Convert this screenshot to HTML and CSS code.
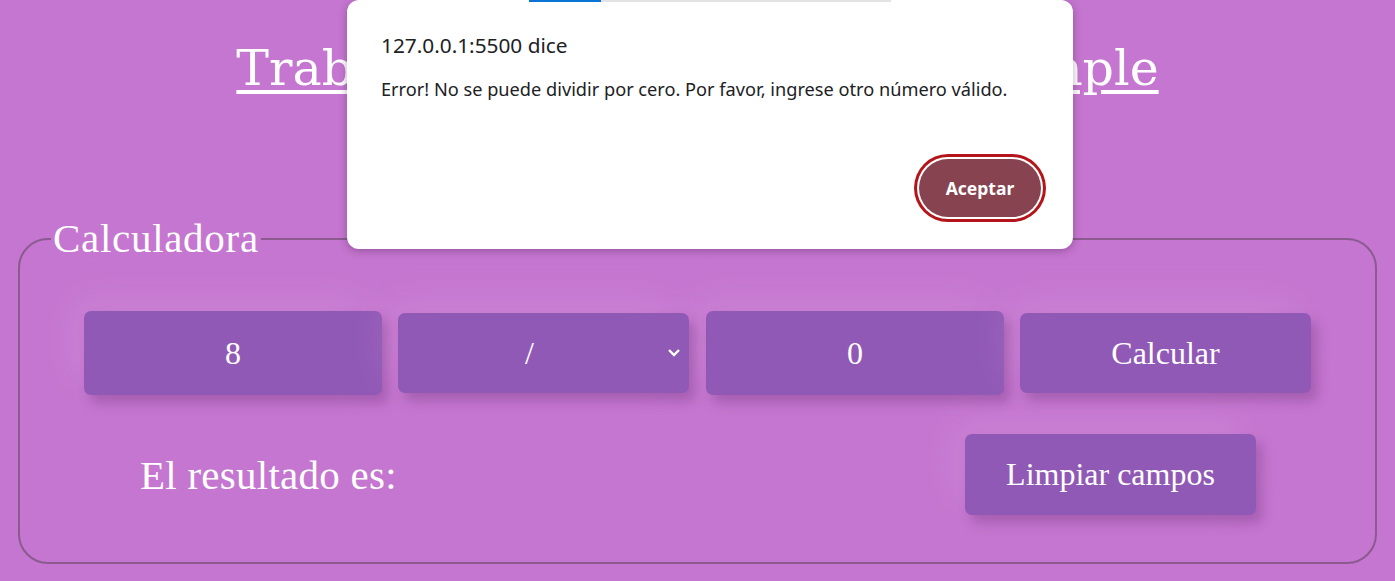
FILE: index.html
```html
<!DOCTYPE html>
<html lang="es">
<head>
<meta charset="utf-8">
<title>Calculadora simple</title>
<link rel="stylesheet" href="styles.css">
</head>
<body>
  <h1 class="title"><span class="title-link">Trabajo Práctico: Calculadora simple</span></h1>

  <fieldset class="calc">
    <legend class="calc-legend">Calculadora</legend>
    <div class="row-inputs">
      <div class="field field-num">8</div>
      <div class="field field-select">
        <span class="select-value">/</span>
        <svg class="chevron" width="14" height="9" viewBox="0 0 14 9"><path d="M2 2 L7 7 L12 2" fill="none" stroke="#fff" stroke-width="2.4"/></svg>
      </div>
      <div class="field field-num">0</div>
      <div class="field field-btn">Calcular</div>
    </div>
    <div class="row-result">
      <p class="result">El resultado es:</p>
      <div class="field field-btn field-clear">Limpiar campos</div>
    </div>
  </fieldset>

  <div class="dialog">
    <div class="progress"><div class="progress-fill"></div></div>
    <div class="dialog-title">127.0.0.1:5500 dice</div>
    <div class="dialog-msg">Error! No se puede dividir por cero. Por favor, ingrese otro número válido.</div>
    <div class="dialog-footer">
      <button class="dialog-btn">Aceptar</button>
    </div>
  </div>
</body>
</html>
```

FILE: styles.css
```css
* { box-sizing: border-box; }

html, body {
  margin: 0;
  padding: 0;
}

body {
  background: #c576d0;
  font-family: "Liberation Serif", serif;
  color: #fff;
  width: 1395px;
  height: 581px;
  overflow: hidden;
  position: relative;
}

.title {
  margin: 38px 0 0;
  height: 61px;
  line-height: 61px;
  text-align: center;
  font-family: "DejaVu Serif", serif;
  font-weight: normal;
  font-size: 49px;
  letter-spacing: 0;
}

.title-link {
  text-decoration: underline;
  text-decoration-thickness: 4px;
  text-underline-offset: 5px;
}

.calc {
  margin: 119px 18px 0;
  padding: 52px 0 47px 0;
  border: 2px solid #8b5a8e;
  border-radius: 30px;
  min-width: 0;
}

.calc-legend {
  margin-left: 31px;
  padding: 0 2px;
  font-size: 41px;
  line-height: 41px;
  letter-spacing: 0.7px;
  color: #fff;
}

.row-inputs {
  display: flex;
  justify-content: center;
  align-items: center;
  gap: 16px;
  height: 84px;
}

.field {
  background: #9159b6;
  border-radius: 7px;
  color: #fff;
  font-size: 32px;
  display: flex;
  align-items: center;
  justify-content: center;
  box-shadow: 6px 8px 12px rgba(110, 50, 120, 0.35), -14px -14px 40px rgba(255, 235, 255, 0.10);
}

.field-num {
  width: 298px;
  height: 84px;
}

.field-select {
  width: 291px;
  height: 80px;
  position: relative;
  padding-right: 28px;
  margin-right: 1px;
}

.select-value {
  font-size: 32px;
}

.chevron {
  position: absolute;
  right: 8px;
  top: 35px;
}

.field-btn {
  width: 291px;
  height: 80px;
}

.row-result {
  display: flex;
  justify-content: space-between;
  align-items: center;
  padding: 0 119px 0 120px;
  margin-top: 39px;
  height: 81px;
}

.result {
  margin: 0;
  font-size: 41px;
  letter-spacing: 0.25px;
}

.field-clear {
  height: 81px;
}

.dialog {
  position: absolute;
  left: 347px;
  top: 0;
  width: 726px;
  height: 249px;
  background: #fff;
  border-radius: 12px;
  box-shadow: 0 2px 8px rgba(60, 20, 70, 0.35);
  font-family: "Noto Sans", "Open Sans", sans-serif;
  color: #202124;
  padding: 31px 32px 32px 34px;
  display: flex;
  flex-direction: column;
}

.progress {
  position: absolute;
  top: 0;
  left: 182px;
  width: 362px;
  height: 2px;
  background: #e3e3e3;
}

.progress-fill {
  width: 72px;
  height: 2px;
  background: #0a74d6;
}

.dialog-title {
  font-size: 20.8px;
  line-height: 28px;
}

.dialog-msg {
  font-size: 18.2px;
  line-height: 24px;
  margin-top: 18px;
}

.dialog-footer {
  margin-top: auto;
  display: flex;
  justify-content: flex-end;
}

.dialog-btn {
  width: 122px;
  height: 58px;
  border: 0;
  border-radius: 29px;
  background: #884351;
  color: #fff;
  font-family: "Noto Sans", "Open Sans", sans-serif;
  font-weight: bold;
  font-size: 17.5px;
  box-shadow: 0 0 0 2px #fff, 0 0 0 5px #b3151b;
}
```
